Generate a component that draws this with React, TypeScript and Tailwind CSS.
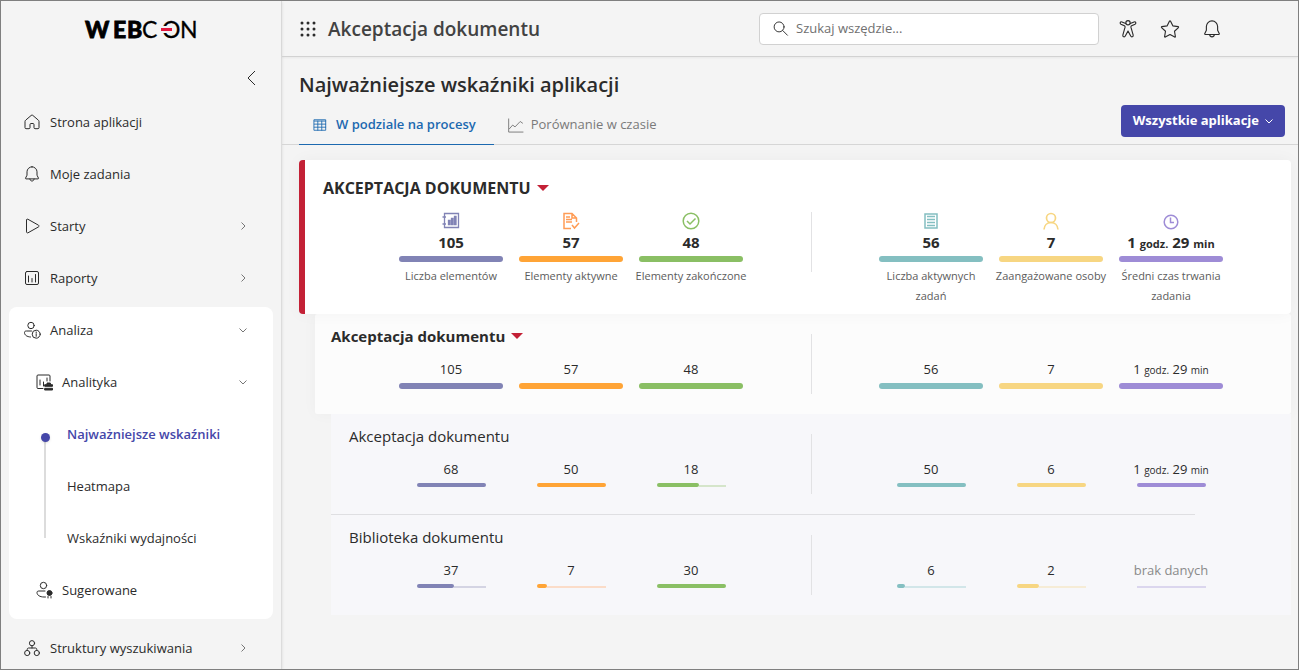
import React from 'react';
import clsx from 'clsx';

type IconName =
  | 'home'
  | 'bell'
  | 'play'
  | 'report'
  | 'personInfo'
  | 'reportToolbox'
  | 'personRibbon'
  | 'structure'
  | 'search'
  | 'accessibility'
  | 'star'
  | 'table'
  | 'chart';

// 16x16 line icons, drawn with the current text colour
const icons: Record<IconName, React.ReactNode> = {
  home: (
    <path d="M7.3 1.3a1 1 0 0 1 1.4 0l5.7 4.9c.4.3.6.8.6 1.3v6.2c0 .6-.4 1-1 1h-3c-.6 0-1-.4-1-1v-3.2c0-.6-.4-1-1-1H7c-.6 0-1 .4-1 1v3.2c0 .6-.4 1-1 1H2c-.6 0-1-.4-1-1V7.5c0-.5.2-1 .6-1.3z" />
  ),
  bell: (
    <>
      <path d="M8 .8a5 5 0 0 0-5 5v3.4l-1.5 3c-.1.4.1.7.5.7h12c.4 0 .6-.3.5-.7l-1.5-3V5.8a5 5 0 0 0-5-5z" />
      <path d="M5.9 13c.2 1.3 1 2 2.1 2s1.9-.7 2.1-2" />
    </>
  ),
  play: <path d="M2.5 2.1v11.8c0 .8.8 1.2 1.5.9l10.500-5.900c.7-.4.7-1.300 0-1.700L4 1.300c-.7-.4-1.500 0-1.500.8z" />,
  report: (
    <>
      <rect x="1.5" y="1.5" width="13" height="13" rx="1.5" />
      <path d="M4.500 6v6M8 8.500V12M11.500 4.500V12" />
    </>
  ),
  personInfo: (
    <>
      <circle cx="7" cy="3.5" r="3.2" />
      <path d="M7.500 9H2.300C1 9 .5 9.600.5 10.600c0 2.400 2.300 4.200 6 4.400" />
      <circle cx="12.2" cy="12.2" r="4" />
      <path d="M12.200 11.700v2.600M12.200 10v.6" />
    </>
  ),
  reportToolbox: (
    <>
      <path d="M7 14.500H2c-.8 0-1-.5-1-1V2c0-.8.5-1 1-1h11c.8 0 1 .5 1 1v5" />
      <path d="M4 6v5M7.500 8v4M11 4v3" />
      <path d="M9 10.700h7.500v1.600H9zM9 14.300h7.500V16H9zM11 10.500V9h3.400v1.500" fill="currentColor" />
    </>
  ),
  personRibbon: (
    <>
      <circle cx="7.5" cy="3.5" r="3.2" />
      <path d="M9 9H2.800C1.500 9 1 9.600 1 10.600c0 2.500 2.800 4.400 7 4.400h1.500" />
      <circle cx="13.5" cy="11" r="2.5" fill="currentColor" />
      <path d="M12 14.500V16M15 14.500V16" />
    </>
  ),
  structure: (
    <>
      <circle cx="8" cy="3.2" r="2.6" />
      <circle cx="3.2" cy="13" r="2.6" />
      <circle cx="12.8" cy="13" r="2.6" />
      <path d="M8 5.800V8M3.200 10.400V9.500c0-.9.500-1.500 1.500-1.500h6.600c1 0 1.500.6 1.500 1.500v.9" />
    </>
  ),
  search: (
    <>
      <circle cx="6.5" cy="6.3" r="5.3" />
      <path d="M10.400 10.200l5 5" />
    </>
  ),
  accessibility: (
    <>
      <circle cx="8" cy="2.4" r="1.9" />
      <path d="M6 3.200 2.600 1.700c-1.500-.5-2.200 1.200-.9 2l3.100 1.500c.5.3.7.6.6 1.200l-2 7.100c-.3 1.500 1.500 2.100 2.200.8L8 9.800l2.400 4.500c.7 1.300 2.500.7 2.200-.8l-2-7.100c-.1-.6.1-.9.6-1.200l3.100-1.500c1.300-.8.6-2.500-.9-2L10 3.200" />
    </>
  ),
  star: (
    <path d="M7.600.9c.2-.3.6-.3.8 0l2.100 4.300 4.700.7c.4.1.5.5.3.8l-3.500 3.300.8 4.700c.1.4-.3.6-.6.4L8 12.900l-4.200 2.200c-.3.2-.7-.1-.6-.4l.8-4.700L.5 6.700c-.3-.3-.1-.7.3-.8l4.700-.7z" />
  ),
  table: <path d="M1.500 2h13v12h-13zM1.500 3.500h13M1.500 7h13M1.500 10.500h13M5.500 3.500V14M10 3.500V14" />,
  chart: (
    <>
      <path d="M.7 1v14H16" />
      <path d="M1.500 11.500 5 7.500l2.500 2L13 3.700l2.500 1.800" />
    </>
  ),
};

function Icon({ name, className = 'size-4' }: { name: IconName; className?: string }) {
  return (
    <svg
      className={clsx('shrink-0 overflow-visible', className)}
      viewBox="0 0 16 16"
      fill="none"
      stroke="currentColor"
      strokeWidth="1"
      strokeLinecap="round"
      strokeLinejoin="round"
      aria-hidden="true"
    >
      {icons[name]}
    </svg>
  );
}

function Chevron({ dir, className }: { dir: 'left' | 'right' | 'down'; className: string }) {
  const d = { left: 'M6 .5 2.500 4 6 7.500', right: 'M2.500.500 6 4 2.500 7.500', down: 'M.5 2.500 4 6l3.500-3.500' }[dir];
  return (
    <svg
      className={clsx('shrink-0 overflow-visible', className)}
      viewBox="0 0 8 8"
      fill="none"
      stroke="currentColor"
      aria-hidden="true"
    >
      <path d={d} vectorEffect="non-scaling-stroke" />
    </svg>
  );
}

function Logo() {
  return (
    <svg className="h-[18px] w-[114px] overflow-visible" viewBox="0 0 114 18" role="img" aria-label="WEBCON">
      <text y="18" fontFamily="Lato, sans-serif" fontSize="23" fill="#000">
        <tspan x="1 29 43" fontWeight="900" stroke="#000" strokeWidth="0.8">
          WEB
        </tspan>
        <tspan x="58 78 96" stroke="#000" strokeWidth="0.3">
          CON
        </tspan>
      </text>
      <rect x="75" y="6" width="9" height="7" fill="#f4f4f4" />
      <rect x="77" y="8" width="11" height="3" fill="#e4173e" />
    </svg>
  );
}

interface INavItem {
  label: string;
  icon: IconName;
  arrow?: 'right' | 'down';
  nested?: boolean;
}

function NavItem({ label, icon, arrow, nested = false }: INavItem) {
  return (
    <a href="#" className={clsx('flex h-[46px] items-center gap-[10px] pr-[26px]', nested ? 'pl-[27px]' : 'pl-[15px]')}>
      <Icon name={icon} />
      <span className="flex-1 pt-px">{label}</span>
      {arrow && <Chevron dir={arrow} className="size-2 text-[#767676]" />}
    </a>
  );
}

function Sidebar() {
  return (
    <aside className="w-[281px] shrink-0 border-r border-[#dcdcdc] shadow-sm">
      <div className="flex h-14 items-center justify-center">
        <Logo />
      </div>
      <div className="flex h-[42px] items-center justify-end pr-[22px]">
        <button type="button" aria-label="Zwiń menu">
          <Chevron dir="left" className="size-4" />
        </button>
      </div>
      <nav className="flex flex-col gap-[6px] px-2 text-[13px]">
        <NavItem label="Strona aplikacji" icon="home" />
        <NavItem label="Moje zadania" icon="bell" />
        <NavItem label="Starty" icon="play" arrow="right" />
        <NavItem label="Raporty" icon="report" arrow="right" />
        <div className="flex flex-col gap-[6px] rounded-lg bg-white pb-[6px]">
          <NavItem label="Analiza" icon="personInfo" arrow="down" />
          <NavItem label="Analityka" icon="reportToolbox" arrow="down" nested />
          <div className="relative flex flex-col gap-[6px]">
            <span className="absolute top-7 bottom-[23px] left-[35px] w-[2px] bg-[#dcdcdc]" />
            <span className="absolute top-[22px] left-8 size-[9px] rounded-full bg-[#4547a9] shadow" />
            <a href="#" className="flex h-[46px] items-center pt-px pl-[58px] font-semibold text-[#4547a9]">
              Najważniejsze wskaźniki
            </a>
            <a href="#" className="flex h-[46px] items-center pt-px pl-[58px]">
              Heatmapa
            </a>
            <a href="#" className="flex h-[46px] items-center pt-px pl-[58px]">
              Wskaźniki wydajności
            </a>
          </div>
          <NavItem label="Sugerowane" icon="personRibbon" nested />
        </div>
        <NavItem label="Struktury wyszukiwania" icon="structure" arrow="right" />
      </nav>
    </aside>
  );
}

function Header() {
  return (
    <header className="flex h-14 items-center border-b border-[#d2d2d2] pr-[65px] pl-[18px] shadow-xs">
      <button type="button" aria-label="Aplikacje">
        <svg className="size-4" viewBox="0 0 16 16" fill="currentColor" aria-hidden="true">
          {[2, 8, 14].map((y) => [2, 8, 14].map((x) => <circle key={`${x}-${y}`} cx={x} cy={y} r="1.5" />))}
        </svg>
      </button>
      <span className="ml-3 pt-px text-[19px] font-semibold text-[#424242]">Akceptacja dokumentu</span>
      <label className="ml-auto flex h-8 w-[340px] items-center gap-2 rounded border border-[#d1d1d1] bg-white px-[13px]">
        <Icon name="search" className="size-[15px]" />
        <input
          type="search"
          aria-label="Szukaj"
          placeholder="Szukaj wszędzie..."
          className="min-w-0 flex-1 text-[13px] outline-none placeholder:text-[#707070]"
        />
      </label>
      <div className="ml-2 flex">
        {(
          [
            ['accessibility', 'Dostępność'],
            ['star', 'Ulubione'],
            ['bell', 'Powiadomienia'],
          ] as [IconName, string][]
        ).map(([name, label]) => (
          <button key={name} type="button" aria-label={label} className="flex h-8 w-[42px] items-center justify-center">
            <Icon name={name} className="size-[18px]" />
          </button>
        ))}
      </div>
    </header>
  );
}

interface IMetric {
  label: string;
  bar: string;
  track: string;
  icon: React.ReactNode;
}

const metrics: IMetric[] = [
  {
    label: 'Liczba elementów',
    bar: 'bg-[#8183b5]',
    track: 'bg-[#d4d4e3]',
    icon: (
      <g stroke="#8183b5" fill="none" strokeWidth="1.3">
        <path d="M2.500 1.500h14v14h-14zM.5 5h3.500M.5 12h3.500" />
        <path d="M6.500 8.500h1.500v4h-1.500zM9.500 6.500h1.500v6H9.500zM12.500 4.500H14v8h-1.500z" fill="#8183b5" />
      </g>
    ),
  },
  {
    label: 'Elementy aktywne',
    bar: 'bg-[#ffa436]',
    track: 'bg-[#fbdcc8]',
    icon: (
      <g stroke="#ff9c55" fill="none" strokeWidth="1.5">
        <path d="M9 16.500H2V1.500h8l4.500 4.500v4M10 1.500V6h4.500M4 5h4M4 7.500h6M4 10h6" />
        <path d="M10 13l2.500 3 4.500-5" />
      </g>
    ),
  },
  {
    label: 'Elementy zakończone',
    bar: 'bg-[#8abf64]',
    track: 'bg-[#d5e5ca]',
    icon: (
      <g stroke="#8abf64" fill="none" strokeWidth="1.5">
        <circle cx="9" cy="9" r="7.8" />
        <path d="M5 9l3 3 5.500-5.500" />
      </g>
    ),
  },
  {
    label: 'Liczba aktywnych zadań',
    bar: 'bg-[#84bfc1]',
    track: 'bg-[#d2e6e9]',
    icon: (
      <g stroke="#84bfc1" fill="none" strokeWidth="1.5">
        <path d="M3 2h12v14H3z" />
        <path d="M5 4.500h8M5 7.500h8M5 10.500h8M5 13.500h8" />
      </g>
    ),
  },
  {
    label: 'Zaangażowane osoby',
    bar: 'bg-[#f7d682]',
    track: 'bg-[#f6ecd6]',
    icon: (
      <g stroke="#f7d682" fill="none" strokeWidth="1.7">
        <circle cx="9" cy="6" r="4.5" />
        <path d="M2 17.500c.3-4 3-7 7-7s6.700 3 7 7" />
      </g>
    ),
  },
  {
    label: 'Średni czas trwania zadania',
    bar: 'bg-[#9e8cd6]',
    track: 'bg-[#dbd6ee]',
    icon: (
      <g stroke="#9e8cd6" fill="none" strokeWidth="1.5">
        <circle cx="9" cy="10" r="6.8" />
        <path d="M8.500 5.500v5H12" />
      </g>
    ),
  },
];

interface IStat {
  value: string;
  fill?: number;
}

type Level = 'app' | 'process' | 'form';

const totals: IStat[] = ['105', '57', '48', '56', '7', '1 godz. 29 min'].map((value) => ({ value }));

const forms: { name: string; stats: IStat[] }[] = [
  {
    name: 'Akceptacja dokumentu',
    stats: [
      { value: '68' },
      { value: '50' },
      { value: '18', fill: 61 },
      { value: '50' },
      { value: '6' },
      { value: '1 godz. 29 min' },
    ],
  },
  {
    name: 'Biblioteka dokumentu',
    stats: [
      { value: '37', fill: 55 },
      { value: '7', fill: 15 },
      { value: '30' },
      { value: '6', fill: 12 },
      { value: '2', fill: 32 },
      { value: 'brak danych', fill: 0 },
    ],
  },
];

function Value({ value, level }: { value: string; level: Level }) {
  if (value === 'brak danych') return <span className="text-[#8a8a8a]">{value}</span>;
  // units of a duration are set smaller than its numbers
  return (
    <>
      {value.split(' ').map((part, i) => (
        <React.Fragment key={i}>
          {i > 0 && ' '}
          <span className={clsx(/[a-z]/.test(part) && (level === 'app' ? 'text-[11px]' : 'text-[10px]'))}>{part}</span>
        </React.Fragment>
      ))}
    </>
  );
}

function Stat({ metric, stat, level }: { metric: IMetric; stat: IStat; level: Level }) {
  const { value, fill = 100 } = stat;
  return (
    <div className="flex flex-col items-center text-center">
      {level === 'app' && (
        <svg className="size-[18px]" viewBox="0 0 18 18" aria-hidden="true">
          {metric.icon}
        </svg>
      )}
      <div
        className={clsx(
          'h-6 leading-6 whitespace-nowrap',
          level === 'app' && 'text-[15px] font-bold',
          level === 'process' && 'mt-[23px] text-[13px] font-medium',
          level === 'form' && 'mt-[23px] text-[13px]'
        )}
      >
        <Value value={value} level={level} />
      </div>
      <div className={clsx('mt-[2px] flex items-end', level === 'form' ? 'h-1 w-[69px]' : 'h-[6px] w-[104px]')}>
        <div className={clsx('h-full rounded-full', metric.bar)} style={{ width: `${fill}%` }} />
        {fill < 100 && <div className={clsx('h-[2px] flex-1', metric.track)} />}
      </div>
      {level === 'app' && <p className="mt-1 text-[11px] leading-5 text-[#5c5c5c]">{metric.label}</p>}
    </div>
  );
}

function StatRow({ stats, level }: { stats: IStat[]; level: Level }) {
  const cells = metrics.map((metric, i) => <Stat key={metric.label} metric={metric} stat={stats[i]} level={level} />);
  return (
    <div
      className={clsx(
        'col-start-1 row-start-1 mr-[60px] ml-auto grid w-[840px] grid-cols-7',
        level === 'app' ? 'pt-[52px]' : 'pt-5'
      )}
    >
      {cells.slice(0, 3)}
      <div className="mx-auto h-[60px] w-px bg-[#e2e2e4]" />
      {cells.slice(3)}
    </div>
  );
}

function Triangle() {
  return (
    <svg className="h-[6px] w-3" viewBox="0 0 12 6" fill="#c32136" aria-hidden="true">
      <path d="M0 0h12L6 6z" />
    </svg>
  );
}

function Toggle({ children, className }: { children: React.ReactNode; className: string }) {
  return (
    <button type="button" className={clsx('flex items-center gap-[6px] leading-6 font-bold', className)}>
      {children}
      <Triangle />
    </button>
  );
}

function Toolbar() {
  return (
    <div className="mt-[6px] flex h-10 items-start border-b border-[#d6d6d6] pr-[13px] pl-[17px]">
      <div role="tablist" className="flex h-10 text-[13px]">
        <button
          type="button"
          role="tab"
          aria-selected="true"
          className="flex items-center gap-[9px] border-b border-[#1c69b0] pr-[18px] pl-[14px] font-semibold text-[#1c69b0]"
        >
          <Icon name="table" className="size-[14px]" />W podziale na procesy
        </button>
        <button
          type="button"
          role="tab"
          aria-selected="false"
          className="flex items-center gap-2 pr-[18px] pl-[14px] text-[#7a7a7a]"
        >
          <Icon name="chart" className="size-[15px]" />
          Porównanie w czasie
        </button>
      </div>
      <button
        type="button"
        className="ml-auto flex h-8 items-center gap-[6px] rounded bg-[#4547a9] px-3 text-[13px] font-bold text-white"
      >
        Wszystkie aplikacje
        <Chevron dir="down" className="size-2" />
      </button>
    </div>
  );
}

export default function App() {
  return (
    <div className="flex h-screen overflow-hidden border border-[#7f7f7f] bg-[#f4f4f4] font-['Open_Sans','Noto_Sans',sans-serif] text-[#2b2b2b]">
      <Sidebar />
      <div className="min-w-0 flex-1">
        <Header />
        <main className="pt-[14px]">
          <h1 className="pl-[17px] text-[20px] leading-7 font-semibold">Najważniejsze wskaźniki aplikacji</h1>
          <Toolbar />
          <div className="mt-[15px] pr-[7px] pl-[17px]">
            <section className="relative grid rounded border-l-[6px] border-[#c32136] bg-white pb-2 shadow-[0_0_16px_rgba(0,0,0,0.04)]">
              <h2 className="col-start-1 row-start-1 pt-4 pl-[18px]">
                <Toggle className="text-[16px]">AKCEPTACJA DOKUMENTU</Toggle>
              </h2>
              <StatRow stats={totals} level="app" />
            </section>
            <section className="ml-4 grid min-h-[100px] rounded-xs bg-[#fcfcfc] shadow-[0_0_16px_rgba(0,0,0,0.03)]">
              <h3 className="col-start-1 row-start-1 pt-[10px] pl-4">
                <Toggle className="text-[15px]">Akceptacja dokumentu</Toggle>
              </h3>
              <StatRow stats={totals} level="process" />
            </section>
            <div className="ml-8 bg-[#f7f7fa]">
              {forms.map((form, i) => (
                <section key={form.name}>
                  {i > 0 && <hr className="mr-24 border-[#dfdfe2]" />}
                  <div className="grid min-h-[100px]">
                    <h4 className="col-start-1 row-start-1 pt-[10px] pl-[18px] text-[15px] leading-6">{form.name}</h4>
                    <StatRow stats={form.stats} level="form" />
                  </div>
                </section>
              ))}
            </div>
          </div>
        </main>
      </div>
    </div>
  );
}
